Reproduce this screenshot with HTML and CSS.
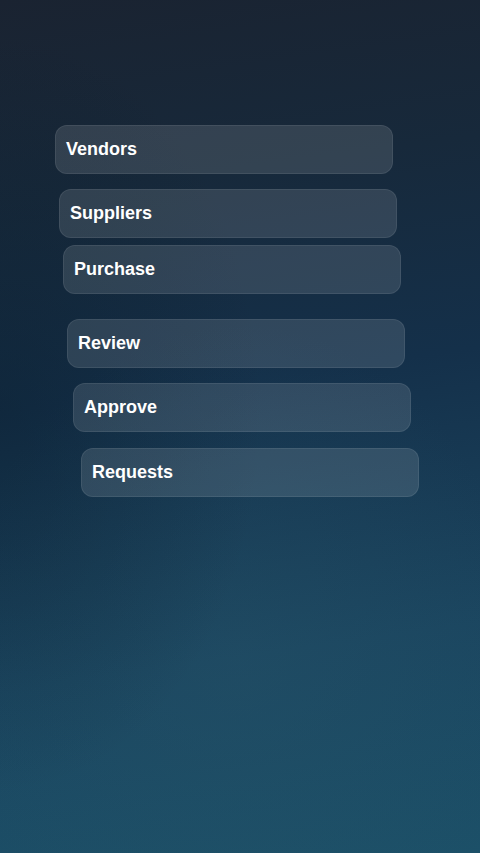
FILE: index.html
```html
<!DOCTYPE html>
<html lang="en">
<head>
  <meta charset="UTF-8" />
  <meta name="viewport" content="width=device-width, initial-scale=1.0"/>
  <title>Procurement Menu</title>
  <link rel="stylesheet" href="styles.css">
</head>
<body>
  <div class="menu">
    <div class="item item-1">Vendors</div>
    <div class="item item-2">Suppliers</div>
    <div class="item item-3">Purchase</div>
    <div class="item item-4">Review</div>
    <div class="item item-5">Approve</div>
    <div class="item item-6">Requests</div>
  </div>
</body>
</html>
```
FILE: styles.css
```css
html, body {
  margin: 0;
  height: 100%;
}
body {
  font-family: 'Liberation Sans', Arial, sans-serif;
  color: #ffffff;
  min-height: 853px;
  background:
    radial-gradient(ellipse 55% 45% at 0% 48%, rgba(8,25,38,0.35), rgba(8,25,38,0) 100%),
    radial-gradient(ellipse 60% 40% at 50% 78%, rgba(40,85,105,0.3), rgba(40,85,105,0) 100%),
    linear-gradient(172deg, #1a2331 0%, #17293b 22%, #14304a 45%, #1b4660 75%, #1c5068 100%);
}
.menu {
  display: flex;
  flex-direction: column;
  padding-top: 125px;
}
.item {
  box-sizing: border-box;
  width: 338px;
  height: 49px;
  display: flex;
  align-items: center;
  padding-left: 10px;
  font-size: 18px;
  font-weight: bold;
  background: rgba(255,255,255,0.12);
  border: 1px solid rgba(255,255,255,0.08);
  border-radius: 12px;
}
.item-1 { margin-left: 55px; }
.item-2 { margin-left: 59px; margin-top: 15px; }
.item-3 { margin-left: 63px; margin-top: 7px; }
.item-4 { margin-left: 67px; margin-top: 25px; }
.item-5 { margin-left: 73px; margin-top: 15px; }
.item-6 { margin-left: 81px; margin-top: 16px; }
```
